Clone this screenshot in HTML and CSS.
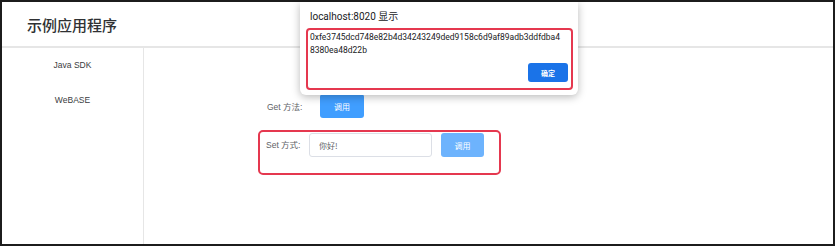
FILE: index.html
```html
<!DOCTYPE html>
<html lang="zh-CN">

<head>
    <meta charset="UTF-8">
    <meta name="viewport" content="width=device-width, initial-scale=1.0">
    <title>示例应用程序</title>

    <link rel="stylesheet" href="styles.css">
</head>

<body>

    <div class="frame">
        <div class="header">
            <h1>示例应用程序</h1>
        </div>

        <div class="layout">
            <ul class="menu">
                <li>Java SDK</li>
                <li>WeBASE</li>
            </ul>

            <div class="main">
                <div class="row get-row">
                    <span class="label">Get 方法:</span>
                    <button class="btn">调用</button>
                </div>

                <div class="row set-row">
                    <span class="label">Set 方式:</span>
                    <input type="text" class="field" value="你好!">
                    <button class="btn btn-light">调用</button>
                </div>
            </div>
        </div>
    </div>

    <!-- browser alert sitting over the page -->
    <div class="alert">
        <p class="alert-title">localhost:8020 显示</p>
        <div class="alert-body">
            <p class="alert-msg">0xfe3745dcd748e82b4d34243249ded9158c6d9af89adb3ddfdba4<br>8380ea48d22b</p>
            <div class="alert-actions">
                <button class="alert-btn">确定</button>
            </div>
        </div>
    </div>

</body>

</html>
```

FILE: styles.css
```css
body {
    margin: 0;
    padding: 0;
    background-color: #fff;
    font-family: "Liberation Sans", Arial, "Noto Sans CJK SC", sans-serif;
    color: #303133;
}

.frame {
    box-sizing: border-box;
    width: 835px;
    height: 246px;
    border: 2px solid #1c1c1c;
    display: flex;
    flex-direction: column;
    overflow: hidden;
}

.header {
    height: 44px;
    border-bottom: 2px solid #e6e6e6;
    display: flex;
    align-items: center;
    padding-left: 25px;
}

.header h1 {
    margin: 0;
    font-family: "Noto Sans CJK SC", sans-serif;
    font-size: 15px;
    font-weight: 500;
    color: #2f3133;
}

.layout {
    flex: 1;
    display: flex;
}

.menu {
    list-style: none;
    margin: 0;
    padding: 0;
    width: 141px;
    border-right: 1px solid #e6e6e6;
}

.menu li {
    height: 35px;
    line-height: 35px;
    text-align: center;
    font-size: 8.5px;
    color: #3a3c40;
}

.main {
    flex: 1;
    padding-top: 46px;
    font-size: 8.5px;
    color: #606266;
}

.row {
    display: flex;
    align-items: center;
}

.label {
    width: 36px;
    white-space: nowrap;
    font-family: "Liberation Sans", "Noto Sans CJK SC", sans-serif;
}

.get-row {
    margin-left: 123px;
    height: 24px;
}

.get-row .btn {
    margin-left: 17px;
}

.set-row {
    box-sizing: border-box;
    margin-top: 12px;
    margin-left: 114px;
    width: 243px;
    height: 45px;
    border: 2px solid #e5384f;
    border-radius: 5px;
    padding: 1px 0 0 6px;
    align-items: flex-start;
}

.set-row .label {
    line-height: 24px;
}

.field {
    box-sizing: border-box;
    width: 123px;
    height: 24px;
    margin-left: 7px;
    border: 1px solid #dcdfe6;
    border-radius: 3px;
    padding: 0 9px;
    font-family: "Noto Sans CJK SC", sans-serif;
    font-size: 8px;
    color: #606266;
    outline: none;
}

.btn {
    width: 44px;
    height: 24px;
    border: none;
    border-radius: 3px;
    background-color: #409eff;
    color: #fff;
    font-family: "Noto Sans CJK SC", sans-serif;
    font-size: 8px;
    padding: 0;
}

.btn-light {
    width: 43px;
    margin-left: 9px;
    background-color: #6db3fd;
}

.alert {
    position: absolute;
    left: 300px;
    top: 2px;
    box-sizing: border-box;
    width: 278px;
    height: 93px;
    background-color: #fff;
    border-radius: 0 0 6px 6px;
    box-shadow: 0 2px 8px rgba(0, 0, 0, 0.28);
    padding: 0 5px 0 6px;
    font-family: Roboto, "Noto Sans CJK SC", sans-serif;
    color: #202124;
}

.alert-title {
    margin: 0;
    height: 26px;
    line-height: 30px;
    padding-left: 4px;
    font-size: 10px;
}

.alert-body {
    box-sizing: border-box;
    width: 267px;
    height: 62px;
    border: 2px solid #e5384f;
    border-radius: 4px;
    padding: 1px 3px 0 2px;
}

.alert-msg {
    margin: 0;
    font-size: 8.5px;
    line-height: 13px;
    height: 32px;
}

.alert-actions {
    display: flex;
    justify-content: flex-end;
}

.alert-btn {
    width: 40px;
    height: 19px;
    border: none;
    border-radius: 3px;
    background-color: #1a73e8;
    color: #fff;
    font-family: "Noto Sans CJK SC", sans-serif;
    font-size: 7px;
    font-weight: bold;
    padding: 0;
}
```
